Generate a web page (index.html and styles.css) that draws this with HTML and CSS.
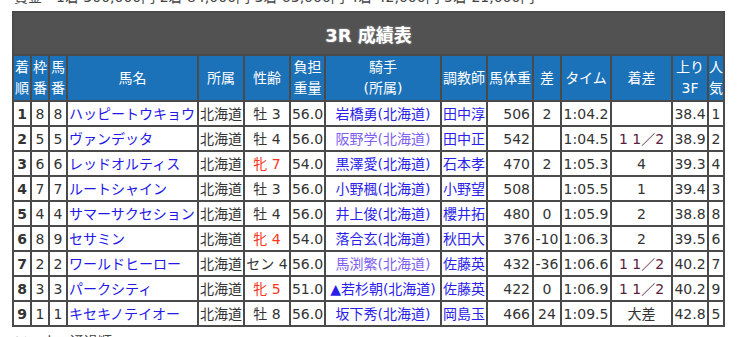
FILE: index.html
```html
<!DOCTYPE html>
<html lang="ja">
<head>
<meta charset="utf-8">
<link rel="stylesheet" href="styles.css">
</head>
<body>
<p class="prize">賞金　1着 300,000円 2着 84,000円 3着 63,000円 4着 42,000円 5着 21,000円</p>
<table class="result">
  <colgroup>
    <col style="width:18px"><col style="width:18px"><col style="width:18px"><col style="width:131px"><col style="width:46px"><col style="width:46px"><col style="width:35px"><col style="width:116px"><col style="width:46px"><col style="width:46px"><col style="width:28px"><col style="width:50px"><col style="width:61px"><col style="width:36px"><col style="width:16px">
  </colgroup>
  <thead>
    <tr><th class="title" colspan="15">3R 成績表</th></tr>
    <tr class="head">
      <th>着<br>順</th><th>枠<br>番</th><th>馬<br>番</th><th>馬名</th><th>所属</th><th>性齢</th><th>負担<br>重量</th><th>騎手<br>(所属)</th><th>調教師</th><th>馬体重</th><th>差</th><th>タイム</th><th>着差</th><th>上り<br>3F</th><th>人<br>気</th>
    </tr>
  </thead>
  <tbody>
    <tr><td class="rk">1</td><td class="c">8</td><td class="c">8</td><td class="nm"><a>ハッピートウキョウ</a></td><td class="c">北海道</td><td class="c">牡 3</td><td class="c">56.0</td><td class="c"><a>岩橋勇(北海道)</a></td><td class="c"><a>田中淳</a></td><td class="r">506</td><td class="c">2</td><td class="c">1:04.2</td><td class="c mg"></td><td class="c">38.4</td><td class="c">1</td></tr>
    <tr><td class="rk">2</td><td class="c">5</td><td class="c">5</td><td class="nm"><a>ヴァンデッタ</a></td><td class="c">北海道</td><td class="c">牡 4</td><td class="c">56.0</td><td class="c"><a class="v">阪野学(北海道)</a></td><td class="c"><a>田中正</a></td><td class="r">542</td><td class="c"></td><td class="c">1:04.5</td><td class="c mg">1 1／2</td><td class="c">38.9</td><td class="c">2</td></tr>
    <tr><td class="rk">3</td><td class="c">6</td><td class="c">6</td><td class="nm"><a>レッドオルティス</a></td><td class="c">北海道</td><td class="c f">牝 7</td><td class="c">54.0</td><td class="c"><a>黒澤愛(北海道)</a></td><td class="c"><a>石本孝</a></td><td class="r">470</td><td class="c">2</td><td class="c">1:05.3</td><td class="c">4</td><td class="c">39.3</td><td class="c">4</td></tr>
    <tr><td class="rk">4</td><td class="c">7</td><td class="c">7</td><td class="nm"><a>ルートシャイン</a></td><td class="c">北海道</td><td class="c">牡 3</td><td class="c">56.0</td><td class="c"><a>小野楓(北海道)</a></td><td class="c"><a>小野望</a></td><td class="r">508</td><td class="c"></td><td class="c">1:05.5</td><td class="c">1</td><td class="c">39.4</td><td class="c">3</td></tr>
    <tr><td class="rk">5</td><td class="c">4</td><td class="c">4</td><td class="nm"><a>サマーサクセション</a></td><td class="c">北海道</td><td class="c">牡 4</td><td class="c">56.0</td><td class="c"><a>井上俊(北海道)</a></td><td class="c"><a>櫻井拓</a></td><td class="r">480</td><td class="c">0</td><td class="c">1:05.9</td><td class="c">2</td><td class="c">38.8</td><td class="c">8</td></tr>
    <tr><td class="rk">6</td><td class="c">8</td><td class="c">9</td><td class="nm"><a>セサミン</a></td><td class="c">北海道</td><td class="c f">牝 4</td><td class="c">54.0</td><td class="c"><a>落合玄(北海道)</a></td><td class="c"><a>秋田大</a></td><td class="r">376</td><td class="c">-10</td><td class="c">1:06.3</td><td class="c">2</td><td class="c">39.5</td><td class="c">6</td></tr>
    <tr><td class="rk">7</td><td class="c">2</td><td class="c">2</td><td class="nm"><a>ワールドヒーロー</a></td><td class="c">北海道</td><td class="c">セン 4</td><td class="c">56.0</td><td class="c"><a class="v">馬渕繁(北海道)</a></td><td class="c"><a>佐藤英</a></td><td class="r">432</td><td class="c">-36</td><td class="c">1:06.6</td><td class="c mg">1 1／2</td><td class="c">40.2</td><td class="c">7</td></tr>
    <tr><td class="rk">8</td><td class="c">3</td><td class="c">3</td><td class="nm"><a>パークシティ</a></td><td class="c">北海道</td><td class="c f">牝 5</td><td class="c">51.0</td><td class="c"><a>▲若杉朝(北海道)</a></td><td class="c"><a>佐藤英</a></td><td class="r">422</td><td class="c">0</td><td class="c">1:06.9</td><td class="c mg">1 1／2</td><td class="c">40.2</td><td class="c">9</td></tr>
    <tr><td class="rk">9</td><td class="c">1</td><td class="c">1</td><td class="nm"><a>キセキノテイオー</a></td><td class="c">北海道</td><td class="c">牡 8</td><td class="c">56.0</td><td class="c"><a>坂下秀(北海道)</a></td><td class="c"><a>岡島玉</a></td><td class="r">466</td><td class="c">24</td><td class="c">1:09.5</td><td class="c">大差</td><td class="c">42.8</td><td class="c">5</td></tr>
  </tbody>
</table>
<p class="corner">コーナー通過順</p>
</body>
</html>
```
FILE: styles.css
```css
html, body {
  margin: 0;
  padding: 0;
  background: #fff;
}
body {
  font-family: "DejaVu Sans", "Noto Sans CJK JP", sans-serif;
  font-size: 14px;
  color: #333;
  padding: 0 0 0 12px;
  overflow: hidden;
}
.prize {
  margin: -13px 0 0 2px;
  line-height: 20px;
  height: 20px;
  font-size: 14px;
  color: #444;
}
.result {
  margin-top: 4px;
  border-collapse: separate;
  border-spacing: 0;
  border: 1px solid #4a4a4a;
  table-layout: fixed;
  width: 713px;
}
.result th, .result td {
  border: 1px solid #4a4a4a;
  padding: 0;
  white-space: nowrap;
  overflow: hidden;
}
.title {
  background: #525252;
  color: #fff;
  font-size: 18px;
  font-weight: bold;
  height: 41px;
  text-shadow: 0 0 2px rgba(255,255,255,0.5);
}
.head th {
  background: #1c72b9;
  color: #fff;
  font-weight: normal;
  line-height: 21px;
  height: 44px;
  font-size: 14px;
}
.result td {
  height: 23px;
  line-height: 22px;
}
.c { text-align: center; }
.r { text-align: right; padding-right: 2px !important; }
.rk { text-align: center; font-weight: bold; }
.nm { text-align: left; padding-left: 1px !important; }
.f { color: #f5371c; }
.mg { color: #5a2040; }
.result a {
  color: #2a1ee8;
  text-decoration: none;
}
.nm a { color: #2418e6; }
.result a.v { color: #7e5ff0; }
.corner {
  margin: 4px 0 0 2px;
  line-height: 20px;
  color: #444;
}
```
